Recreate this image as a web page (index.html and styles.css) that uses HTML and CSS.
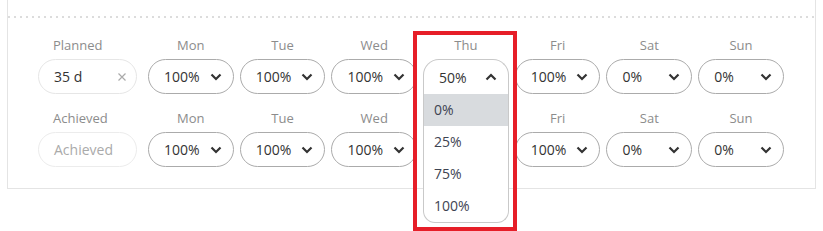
FILE: index.html
```html
<!DOCTYPE html>
<html>
<head>
<meta charset="utf-8">
<link rel="stylesheet" href="styles.css">
</head>
<body>
<div class="page">
  <div class="card">
    <div class="sep"></div>
    <div class="grid">
      <div class="cell first">
        <span class="lbl">Planned</span>
        <div class="field">
          <span class="val">35 d</span>
          <svg class="clear" width="10" height="10" viewBox="0 0 10 10"><path d="M1.5 1.5 L8.5 8.5 M8.5 1.5 L1.5 8.5" stroke="#aaa" stroke-width="1.2" fill="none"/></svg>
        </div>
      </div>
      <div class="cell"><span class="lbl">Mon</span><div class="select"><span>100%</span><svg class="chev" width="12" height="8" viewBox="0 0 12 8"><path d="M1.5 1.5 L6 6 L10.5 1.5" stroke="#333" stroke-width="2.2" fill="none"/></svg></div></div>
      <div class="cell"><span class="lbl">Tue</span><div class="select"><span>100%</span><svg class="chev" width="12" height="8" viewBox="0 0 12 8"><path d="M1.5 1.5 L6 6 L10.5 1.5" stroke="#333" stroke-width="2.2" fill="none"/></svg></div></div>
      <div class="cell"><span class="lbl">Wed</span><div class="select"><span>100%</span><svg class="chev" width="12" height="8" viewBox="0 0 12 8"><path d="M1.5 1.5 L6 6 L10.5 1.5" stroke="#333" stroke-width="2.2" fill="none"/></svg></div></div>
      <div class="cell thu">
        <span class="lbl">Thu</span>
        <div class="select open"><span>50%</span><svg class="chev" width="12" height="8" viewBox="0 0 12 8"><path d="M1.5 6.5 L6 2 L10.5 6.5" stroke="#333" stroke-width="2.2" fill="none"/></svg></div>
        <ul class="menu">
          <li class="active">0%</li>
          <li>25%</li>
          <li>75%</li>
          <li>100%</li>
        </ul>
        <div class="mark"></div>
      </div>
      <div class="cell"><span class="lbl">Fri</span><div class="select"><span>100%</span><svg class="chev" width="12" height="8" viewBox="0 0 12 8"><path d="M1.5 1.5 L6 6 L10.5 1.5" stroke="#333" stroke-width="2.2" fill="none"/></svg></div></div>
      <div class="cell"><span class="lbl">Sat</span><div class="select"><span>0%</span><svg class="chev" width="12" height="8" viewBox="0 0 12 8"><path d="M1.5 1.5 L6 6 L10.5 1.5" stroke="#333" stroke-width="2.2" fill="none"/></svg></div></div>
      <div class="cell"><span class="lbl">Sun</span><div class="select"><span>0%</span><svg class="chev" width="12" height="8" viewBox="0 0 12 8"><path d="M1.5 1.5 L6 6 L10.5 1.5" stroke="#333" stroke-width="2.2" fill="none"/></svg></div></div>

      <div class="cell first">
        <span class="lbl">Achieved</span>
        <div class="field empty"><span class="ph">Achieved</span></div>
      </div>
      <div class="cell"><span class="lbl">Mon</span><div class="select"><span>100%</span><svg class="chev" width="12" height="8" viewBox="0 0 12 8"><path d="M1.5 1.5 L6 6 L10.5 1.5" stroke="#333" stroke-width="2.2" fill="none"/></svg></div></div>
      <div class="cell"><span class="lbl">Tue</span><div class="select"><span>100%</span><svg class="chev" width="12" height="8" viewBox="0 0 12 8"><path d="M1.5 1.5 L6 6 L10.5 1.5" stroke="#333" stroke-width="2.2" fill="none"/></svg></div></div>
      <div class="cell"><span class="lbl">Wed</span><div class="select"><span>100%</span><svg class="chev" width="12" height="8" viewBox="0 0 12 8"><path d="M1.5 1.5 L6 6 L10.5 1.5" stroke="#333" stroke-width="2.2" fill="none"/></svg></div></div>
      <div class="cell covered"><span class="lbl">Thu</span><div class="select"><span>100%</span><svg class="chev" width="12" height="8" viewBox="0 0 12 8"><path d="M1.5 1.5 L6 6 L10.5 1.5" stroke="#333" stroke-width="2.2" fill="none"/></svg></div></div>
      <div class="cell"><span class="lbl">Fri</span><div class="select"><span>100%</span><svg class="chev" width="12" height="8" viewBox="0 0 12 8"><path d="M1.5 1.5 L6 6 L10.5 1.5" stroke="#333" stroke-width="2.2" fill="none"/></svg></div></div>
      <div class="cell"><span class="lbl">Sat</span><div class="select"><span>0%</span><svg class="chev" width="12" height="8" viewBox="0 0 12 8"><path d="M1.5 1.5 L6 6 L10.5 1.5" stroke="#333" stroke-width="2.2" fill="none"/></svg></div></div>
      <div class="cell"><span class="lbl">Sun</span><div class="select"><span>0%</span><svg class="chev" width="12" height="8" viewBox="0 0 12 8"><path d="M1.5 1.5 L6 6 L10.5 1.5" stroke="#333" stroke-width="2.2" fill="none"/></svg></div></div>
    </div>
  </div>
</div>
</body>
</html>
```

FILE: styles.css
```css
html, body {
  margin: 0;
  padding: 0;
  background: #ffffff;
}

body {
  font-family: "Open Sans", "Noto Sans", sans-serif;
  color: #333;
}

.page {
  padding-left: 7px;
  min-height: 231px;
}

.card {
  width: 809px;
  box-sizing: border-box;
  border: 1px solid #e4e4e4;
  border-top: none;
  padding: 16px 0 21px;
}

.sep {
  height: 2px;
  background-image: linear-gradient(to right, #dcdcdc 2px, transparent 2px);
  background-size: 6px 2px;
  background-repeat: repeat-x;
}

.grid {
  display: grid;
  grid-template-columns: 104px repeat(7, 85.7px);
  column-gap: 6px;
  row-gap: 16px;
  margin-top: 19px;
  padding-left: 30px;
}

.cell {
  display: flex;
  flex-direction: column;
  gap: 6px;
}

.cell.covered {
  visibility: hidden;
}

.lbl {
  font-size: 13px;
  line-height: 16px;
  color: #8c8c8c;
  text-align: center;
}

.first .lbl {
  text-align: left;
  padding-left: 15px;
}

.field {
  width: 99px;
  height: 35px;
  box-sizing: border-box;
  border: 1px solid #e6e6e6;
  border-radius: 18px;
  display: flex;
  align-items: center;
  justify-content: space-between;
  padding: 0 9px 0 15px;
  font-size: 14px;
  color: #333;
}

.field.empty {
  border-color: #ececec;
}

.field .ph {
  color: #aaa;
}

.select {
  height: 35px;
  box-sizing: border-box;
  border: 1px solid #ababab;
  border-radius: 18px;
  display: flex;
  align-items: center;
  justify-content: space-between;
  padding: 0 11px 0 15px;
  font-size: 14px;
  color: #333;
}

.thu {
  position: relative;
  z-index: 2;
}

.select.open {
  border-color: #c9c9c9;
  border-bottom: none;
  border-radius: 16px 16px 0 0;
}

.menu {
  position: absolute;
  left: 0;
  right: 0;
  top: 57px;
  margin: 0;
  padding: 0;
  list-style: none;
  background: #fff;
  border: 1px solid #c9c9c9;
  border-top: none;
  border-radius: 0 0 12px 12px;
  overflow: hidden;
}

.menu li {
  height: 32px;
  line-height: 32px;
  padding-left: 10px;
  font-size: 14px;
  color: #3e4452;
}

.menu li.active {
  background: #d8dbde;
}

.mark {
  position: absolute;
  left: -10px;
  top: -6px;
  width: 104px;
  height: 200px;
  box-sizing: border-box;
  border: 4px solid #e61e28;
  pointer-events: none;
}
```
